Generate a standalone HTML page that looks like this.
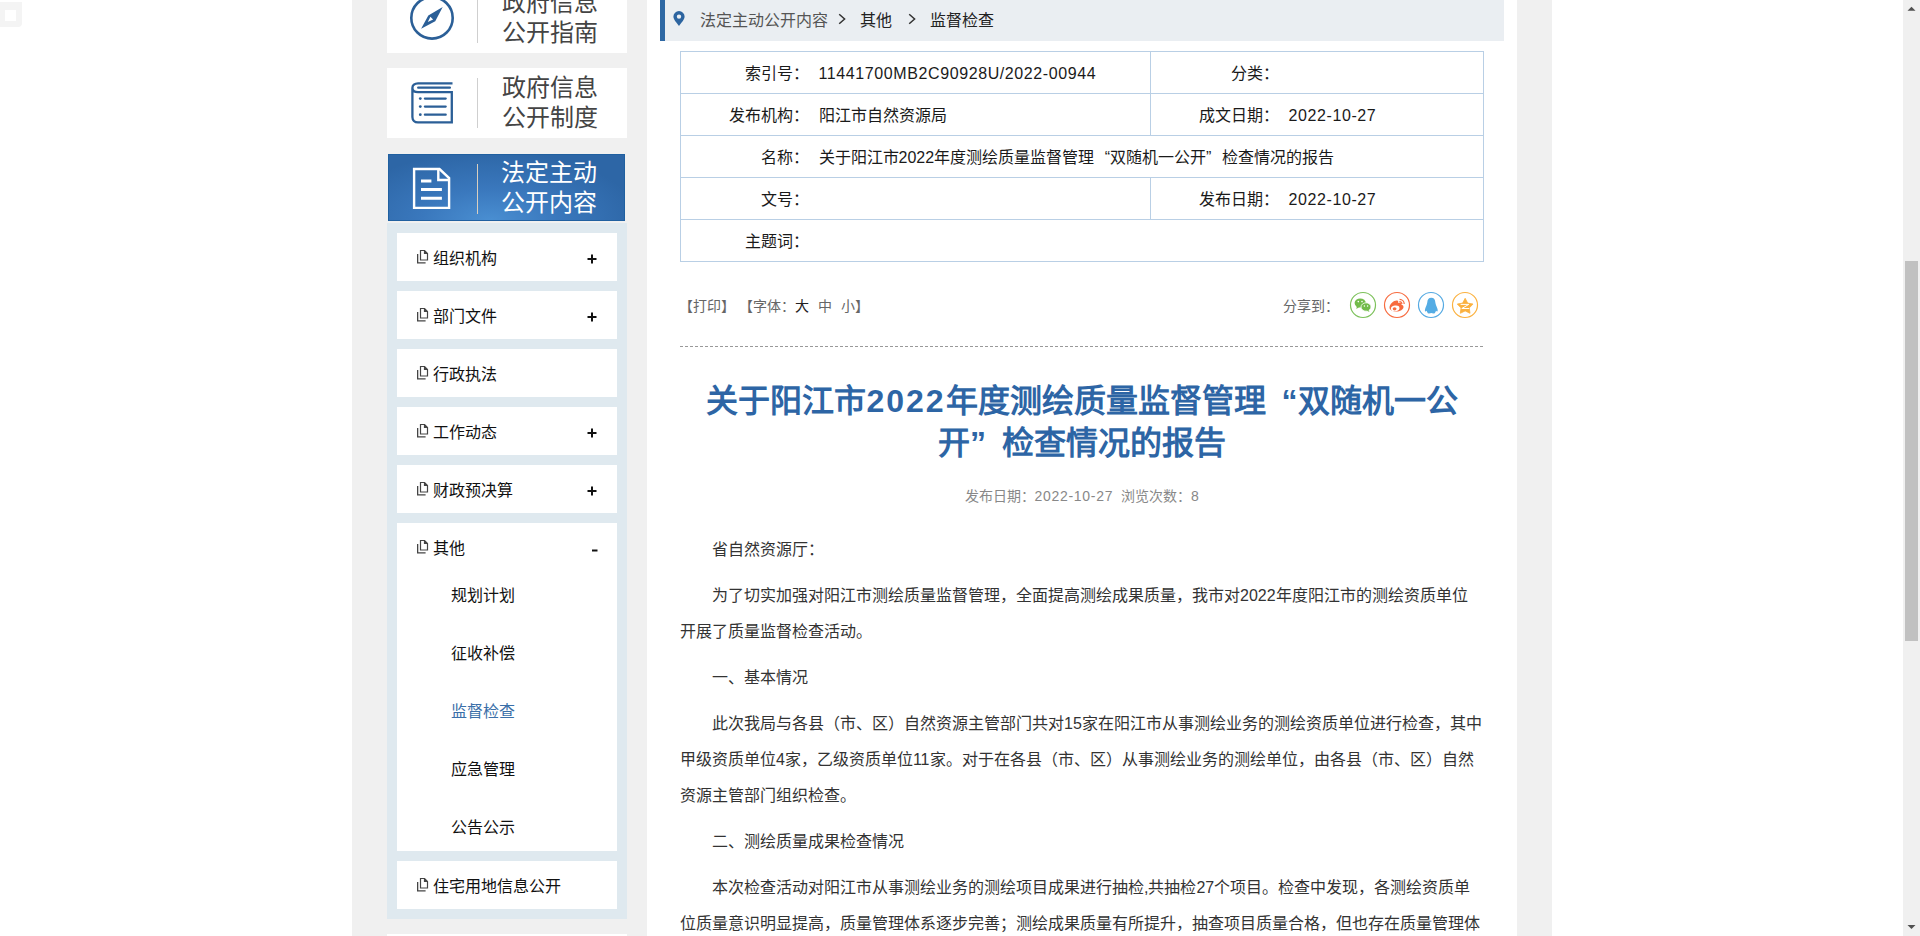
<!DOCTYPE html>
<html lang="zh-CN">
<head>
<meta charset="utf-8">
<title>监督检查</title>
<style>
html,body{margin:0;padding:0;width:1920px;height:936px;overflow:hidden;background:#fff;}
body{font-family:"Liberation Sans",sans-serif;color:#333;position:relative;text-spacing-trim:space-all;}
.abs{position:absolute;}
#wrap{position:absolute;left:352px;top:0;width:1200px;height:936px;background:#f0f0f0;}
.card{position:absolute;left:387px;width:240px;height:70px;background:#fff;}
.card .ico{position:absolute;left:18px;top:10px;width:52px;height:52px;}
.card .dv{position:absolute;left:90px;top:10px;width:1px;height:50px;background:#cfcfcf;}
.card .tx{position:absolute;left:115px;top:5px;font-size:24px;line-height:30px;color:#444;white-space:nowrap;}
#c3{left:388px;width:235px;height:65px;top:154px;border:1px solid #2060a0;background:radial-gradient(ellipse 150px 70px at 101px 66px,#4a8fd2 0%,#3a78bd 45%,#2d66a6 100%);}
#c3 .dv{left:88px;top:9px;background:#d9cfbf;}
#c3 .tx{color:#fff;left:112px;top:3px;}
#panel{position:absolute;left:387px;top:223px;width:240px;height:696px;background:#dfe9ef;}
.it{position:absolute;left:397px;width:220px;height:48px;background:#fff;}
.it .lb{position:absolute;left:36px;top:2px;line-height:48px;font-size:16px;color:#111;white-space:nowrap;}
.it svg.di{position:absolute;left:20px;top:17px;}
.it .pm{position:absolute;left:190px;top:21px;width:10px;height:10px;}
.it .pm.mi{left:194px;top:23px;}
.sub{position:absolute;left:451px;font-size:16px;color:#222;line-height:20px;white-space:nowrap;}
#main{position:absolute;left:647px;top:0;width:870px;height:936px;background:#fff;}
#bc{position:absolute;left:660px;top:0;width:839px;height:41px;background:#eaeef2;border-left:5px solid #2e68a4;}
#bc .t{position:absolute;top:1px;line-height:40px;font-size:16px;white-space:nowrap;}
#info{position:absolute;left:680px;top:51px;width:803px;border-collapse:collapse;table-layout:fixed;font-size:16px;line-height:20px;color:#1a1a1a;}
#info td{border-top:1px solid #b9cfe5;border-bottom:1px solid #b9cfe5;height:39px;padding:2px 0 0 0;white-space:nowrap;}
#info td:first-child{border-left:1px solid #b9cfe5;}
#info td:last-child{border-right:1px solid #b9cfe5;}
#info td.v2{border-right:1px solid #b9cfe5;}
.n{letter-spacing:0.6px;}
#info td.k{text-align:right;padding-right:0;}
#info td.v{padding-left:10px;}
.lq,.rq{display:inline-block;width:1em;}
.lq{text-align:right}
.rq{text-align:left}
#tools{left:679px;top:296px;font-size:14px;line-height:20px;color:#666;white-space:nowrap;}
#share{left:1283px;top:296px;font-size:14px;line-height:20px;color:#666;white-space:nowrap;}
#dash{left:680px;top:346px;width:804px;height:1px;background:repeating-linear-gradient(90deg,#999 0 3px,transparent 3px 5px);}
#title{left:680px;top:380px;width:804px;text-align:center;font-size:32px;line-height:42px;font-weight:bold;color:#2d65a5;white-space:nowrap;}
#meta{left:680px;top:486px;width:804px;text-align:center;font-size:14px;line-height:20px;color:#888;white-space:nowrap;}
#body{left:680px;top:532px;width:804px;font-size:16px;line-height:36px;color:#333;white-space:nowrap;}
#body p{margin:0 0 10px 0;text-indent:32px;}
#sb{position:absolute;left:1903px;top:0;width:17px;height:936px;background:#f0f0f0;}
#thumb{position:absolute;left:2px;top:261px;width:13px;height:380px;background:#c1c1c1;}
</style>
</head>
<body>
<div id="wrap"></div>

<!-- sidebar cards -->
<div class="card" style="top:-17px">
  <svg class="ico" viewBox="0 0 52 52" width="52" height="52" style="left:19px;top:9px">
    <g transform="translate(26 25.9)" fill="#2b5f97">
    <circle cx="0" cy="0" r="20.7" fill="none" stroke="#2b5f97" stroke-width="2.6"/>
    <path d="M10.7 -10.9 L3.25 3.25 L-10.9 10.9 L-3.7 -2.5 Z M-1.6 -1.1 L1.1 1.6 L-4.2 4.2 Z" fill-rule="evenodd"/>
    </g>
  </svg>
  <div class="dv"></div>
  <div class="tx">政府信息<br>公开指南</div>
</div>
<div class="card" style="top:68px">
  <svg class="ico" viewBox="0 0 52 52" width="52" height="52" style="left:19px;top:10px">
    <g fill="none" stroke="#2b5f97" stroke-width="2.3" stroke-linecap="round">
    <path d="M46.5 5.3 H12 C8.5 5.3 6.4 7.5 6.4 10 V39 C6.4 42 8.5 44.4 12 44.4 H45.8 V14.2 H12 C8.5 14.2 6.4 12.5 6.4 10" stroke-linecap="butt"/>
    <path d="M12.2 9.7 H43.9 M18.9 20.6 H39.7 M18.9 28.6 H39.7 M18.9 36.7 H39.7"/>
    </g>
    <g fill="#2b5f97"><circle cx="14.3" cy="20.6" r="1.4"/><circle cx="14.3" cy="28.6" r="1.4"/><circle cx="14.3" cy="36.7" r="1.4"/></g>
  </svg>
  <div class="dv"></div>
  <div class="tx">政府信息<br>公开制度</div>
</div>
<div class="card" id="c3">
  <svg class="ico" viewBox="0 0 52 52" width="52" height="52" style="left:17px;top:5px">
    <g fill="none" stroke="#fff" stroke-width="2.4">
    <path d="M8.1 9 H33.5 L43.1 18 V47.9 H8.1 Z"/>
    <path d="M32.3 9 V20 H43.1"/>
    </g>
    <g fill="none" stroke="#fff" stroke-width="3"><path d="M15 20.9 H25.4 M15 29.6 H35.9 M15 38.3 H35.9"/></g>
  </svg>
  <div class="dv"></div>
  <div class="tx">法定主动<br>公开内容</div>
</div>

<div id="panel"></div>
<div class="it" style="top:233px"><svg class="di" width="14" height="16" viewBox="0 0 14 16"><g fill="none" stroke="#444" stroke-width="1.2"><path d="M3.5 0.5 H7.5 L10.5 3.5 V10 H3.5 Z M7.5 0.5 V3.5 H10.5"/><path d="M0.6 4 V12.9 H8.6" stroke-width="1.4"/></g></svg><div class="lb">组织机构</div><svg class="pm" width="10" height="10" viewBox="0 0 10 10"><path d="M0.5 4.9 H9.5 M5 0.5 V9.5" stroke="#111" stroke-width="2"/></svg></div>
<div class="it" style="top:291px"><svg class="di" width="14" height="16" viewBox="0 0 14 16"><g fill="none" stroke="#444" stroke-width="1.2"><path d="M3.5 0.5 H7.5 L10.5 3.5 V10 H3.5 Z M7.5 0.5 V3.5 H10.5"/><path d="M0.6 4 V12.9 H8.6" stroke-width="1.4"/></g></svg><div class="lb">部门文件</div><svg class="pm" width="10" height="10" viewBox="0 0 10 10"><path d="M0.5 4.9 H9.5 M5 0.5 V9.5" stroke="#111" stroke-width="2"/></svg></div>
<div class="it" style="top:349px"><svg class="di" width="14" height="16" viewBox="0 0 14 16"><g fill="none" stroke="#444" stroke-width="1.2"><path d="M3.5 0.5 H7.5 L10.5 3.5 V10 H3.5 Z M7.5 0.5 V3.5 H10.5"/><path d="M0.6 4 V12.9 H8.6" stroke-width="1.4"/></g></svg><div class="lb">行政执法</div></div>
<div class="it" style="top:407px"><svg class="di" width="14" height="16" viewBox="0 0 14 16"><g fill="none" stroke="#444" stroke-width="1.2"><path d="M3.5 0.5 H7.5 L10.5 3.5 V10 H3.5 Z M7.5 0.5 V3.5 H10.5"/><path d="M0.6 4 V12.9 H8.6" stroke-width="1.4"/></g></svg><div class="lb">工作动态</div><svg class="pm" width="10" height="10" viewBox="0 0 10 10"><path d="M0.5 4.9 H9.5 M5 0.5 V9.5" stroke="#111" stroke-width="2"/></svg></div>
<div class="it" style="top:465px"><svg class="di" width="14" height="16" viewBox="0 0 14 16"><g fill="none" stroke="#444" stroke-width="1.2"><path d="M3.5 0.5 H7.5 L10.5 3.5 V10 H3.5 Z M7.5 0.5 V3.5 H10.5"/><path d="M0.6 4 V12.9 H8.6" stroke-width="1.4"/></g></svg><div class="lb">财政预决算</div><svg class="pm" width="10" height="10" viewBox="0 0 10 10"><path d="M0.5 4.9 H9.5 M5 0.5 V9.5" stroke="#111" stroke-width="2"/></svg></div>
<div class="it" style="top:523px;height:328px"><svg class="di" width="14" height="16" viewBox="0 0 14 16"><g fill="none" stroke="#444" stroke-width="1.2"><path d="M3.5 0.5 H7.5 L10.5 3.5 V10 H3.5 Z M7.5 0.5 V3.5 H10.5"/><path d="M0.6 4 V12.9 H8.6" stroke-width="1.4"/></g></svg><div class="lb">其他</div><svg class="pm mi" width="10" height="10" viewBox="0 0 10 10"><path d="M1 4.5 H6.5" stroke="#111" stroke-width="2"/></svg></div>
<div class="it" style="top:861px"><svg class="di" width="14" height="16" viewBox="0 0 14 16"><g fill="none" stroke="#444" stroke-width="1.2"><path d="M3.5 0.5 H7.5 L10.5 3.5 V10 H3.5 Z M7.5 0.5 V3.5 H10.5"/><path d="M0.6 4 V12.9 H8.6" stroke-width="1.4"/></g></svg><div class="lb">住宅用地信息公开</div></div>
<div class="sub" style="top:586px;color:#111">规划计划</div>
<div class="sub" style="top:644px;color:#111">征收补偿</div>
<div class="sub" style="top:702px;color:#3a6fa8">监督检查</div>
<div class="sub" style="top:760px;color:#111">应急管理</div>
<div class="sub" style="top:818px;color:#111">公告公示</div>
<div class="card" style="top:934px"></div>

<div id="main"></div>
<div id="bc">
  <svg class="abs" style="left:8px;top:11px" width="13" height="16" viewBox="0 0 13 16"><path d="M6 15 C3.6 11.8 0.4 8.6 0.4 5.6 A5.6 5.6 0 0 1 11.6 5.6 C11.6 8.6 8.4 11.8 6 15 Z M6 3.4 A2.2 2.2 0 1 0 6 7.8 A2.2 2.2 0 1 0 6 3.4 Z" fill="#2c64a0" fill-rule="evenodd"/></svg>
  <div class="t" style="left:35px;color:#555">法定主动公开内容</div>
  <svg class="abs" style="left:173px;top:13px" width="9" height="12" viewBox="0 0 9 12"><path d="M1.2 1.2 L6.6 6 L1.2 10.8" fill="none" stroke="#333" stroke-width="1.5"/></svg>
  <div class="t" style="left:195px;color:#222">其他</div>
  <svg class="abs" style="left:243px;top:13px" width="9" height="12" viewBox="0 0 9 12"><path d="M1.2 1.2 L6.6 6 L1.2 10.8" fill="none" stroke="#333" stroke-width="1.5"/></svg>
  <div class="t" style="left:265px;color:#222">监督检查</div>
</div>

<table id="info"><colgroup><col style="width:128px"><col style="width:342px"><col style="width:128px"><col style="width:205px"></colgroup>
<tr><td class="k">索引号：</td><td class="v v2"><span class="n">11441700MB2C90928U/2022-00944</span></td><td class="k">分类：</td><td class="v"></td></tr>
<tr><td class="k">发布机构：</td><td class="v v2">阳江市自然资源局</td><td class="k">成文日期：</td><td class="v"><span class="n">2022-10-27</span></td></tr>
<tr><td class="k">名称：</td><td class="v" colspan="3">关于阳江市2022年度测绘质量监督管理<span class="lq">“</span>双随机一公开<span class="rq">”</span>检查情况的报告</td></tr>
<tr><td class="k">文号：</td><td class="v v2"></td><td class="k">发布日期：</td><td class="v"><span class="n">2022-10-27</span></td></tr>
<tr><td class="k">主题词：</td><td class="v" colspan="3"></td></tr>
</table>

<div class="abs" id="tools">【打印】 【字体：<span style="color:#222">大</span><span style="margin-left:9px">中</span><span style="margin-left:9px">小</span>】</div>
<div class="abs" id="share">分享到：</div>
<div class="abs" id="dash"></div>
<svg class="abs" style="left:1349px;top:291px" width="132" height="28" viewBox="0 0 132 28">
 <circle cx="14" cy="14" r="12.5" fill="#fff" stroke="#7cc15a" stroke-width="1.2"/>
 <circle cx="48" cy="14" r="12.5" fill="#fff" stroke="#f76b3f" stroke-width="1.2"/>
 <circle cx="82" cy="14" r="12.5" fill="#fff" stroke="#54a9e2" stroke-width="1.2"/>
 <circle cx="116" cy="14" r="12.5" fill="#fff" stroke="#fbb13f" stroke-width="1.2"/>
 <g fill="#72bb4b">
  <ellipse cx="11.2" cy="12" rx="5.6" ry="4.6"/><path d="M8 15 L7.3 18 L10.5 16 Z"/>
 </g>
 <g fill="#72bb4b" stroke="#fff" stroke-width="0.8"><ellipse cx="17" cy="16" rx="5" ry="4.2"/></g>
 <path d="M19.5 19 L20.5 21 L17.5 19.6 Z" fill="#72bb4b"/>
 <g fill="#fff"><circle cx="9.3" cy="10.6" r="0.8"/><circle cx="13" cy="10.6" r="0.8"/><circle cx="15.4" cy="15" r="0.7"/><circle cx="18.6" cy="15" r="0.7"/></g>
 <path d="M40.5 16.5 C40.5 13 45 9.2 48 9.5 C49.5 9.7 49.5 11 49 12 C51.5 11.2 53 12 52.3 13.6 C53.8 14 54.5 14.8 54.5 16 C54.5 18.6 51 20.5 47.5 20.5 C43.5 20.5 40.5 19 40.5 16.5 Z" fill="#f76b3f"/>
 <ellipse cx="46.2" cy="17.4" rx="4.3" ry="2.9" fill="#fff" transform="rotate(-8 46.2 17.4)"/><ellipse cx="45.6" cy="17.8" rx="1.9" ry="1.6" fill="#f76b3f"/>
 <path d="M50.6 8.4 A4.6 4.6 0 0 1 55.2 13 M50.4 10.6 A2.4 2.4 0 0 1 52.9 13" fill="none" stroke="#f76b3f" stroke-width="1.2"/>
 <path d="M82.3 6.8 C79.6 6.8 78.4 8.8 78.3 11.3 C78 13.8 76.8 15.8 76.1 18 C75.7 19.6 75.9 20.6 76.6 20.4 L77.6 19.8 C77.8 20.6 78.1 21.2 78.6 21.6 C78 22 78.6 22.6 80 22.5 C81 22.4 81.7 22.1 82.3 22 C82.9 22.1 83.6 22.4 84.6 22.5 C86 22.6 86.6 22 86 21.6 C86.5 21.2 86.8 20.6 87 19.8 L88 20.4 C88.7 20.6 88.9 19.6 88.5 18 C87.8 15.8 86.6 13.8 86.3 11.3 C86.2 8.8 85 6.8 82.3 6.8 Z" fill="#54ace4"/>
 <path d="M116.15 7.30 L118.68 12.12 L124.04 13.04 L120.24 16.93 L121.03 22.31 L116.15 19.90 L111.27 22.31 L112.06 16.93 L108.26 13.04 L113.62 12.12 Z" fill="#fbb13f" stroke="#fbb13f" stroke-width="0.8" stroke-linejoin="round"/>
 <path d="M111.6 13.4 H119.8 L112.8 17.5 H120.2" fill="none" stroke="#fff" stroke-width="1"/>
</svg>

<div class="abs" id="title">关于阳江市<span style="letter-spacing:2px">2022</span>年度测绘质量监督管理<span class="lq">“</span>双随机一公<br>开<span class="rq">”</span>检查情况的报告</div>
<div class="abs" id="meta">发布日期：<span style="letter-spacing:0.7px">2022-10-27</span> &nbsp;浏览次数：<span style="letter-spacing:0.7px">8</span></div>

<div class="abs" id="body">
<p>省自然资源厅：</p>
<p>为了切实加强对阳江市测绘质量监督管理，全面提高测绘成果质量，我市对2022年度阳江市的测绘资质单位<br>开展了质量监督检查活动。</p>
<p>一、基本情况</p>
<p>此次我局与各县（市、区）自然资源主管部门共对15家在阳江市从事测绘业务的测绘资质单位进行检查，其中<br>甲级资质单位4家，乙级资质单位11家。对于在各县（市、区）从事测绘业务的测绘单位，由各县（市、区）自然<br>资源主管部门组织检查。</p>
<p>二、测绘质量成果检查情况</p>
<p>本次检查活动对阳江市从事测绘业务的测绘项目成果进行抽检,共抽检27个项目。检查中发现，各测绘资质单<br>位质量意识明显提高，质量管理体系逐步完善；测绘成果质量有所提升，抽查项目质量合格，但也存在质量管理体</p>
</div>

<div class="abs" style="left:0;top:2px;width:22px;height:25px;background:#f4f4f4;border-radius:0 0 4px 0"><div class="abs" style="left:5px;top:8px;width:11px;height:11px;background:#fff"></div></div>
<div id="sb"><div id="thumb"></div>
<svg class="abs" style="left:0;top:0" width="17" height="17" viewBox="0 0 17 17"><path d="M4.5 10.8 L8.5 6.8 L12.5 10.8 Z" fill="#505050"/></svg>
<svg class="abs" style="left:0;top:919px" width="17" height="17" viewBox="0 0 17 17"><path d="M4.5 6 L8.5 10 L12.5 6 Z" fill="#505050"/></svg>
</div>
</body>
</html>
